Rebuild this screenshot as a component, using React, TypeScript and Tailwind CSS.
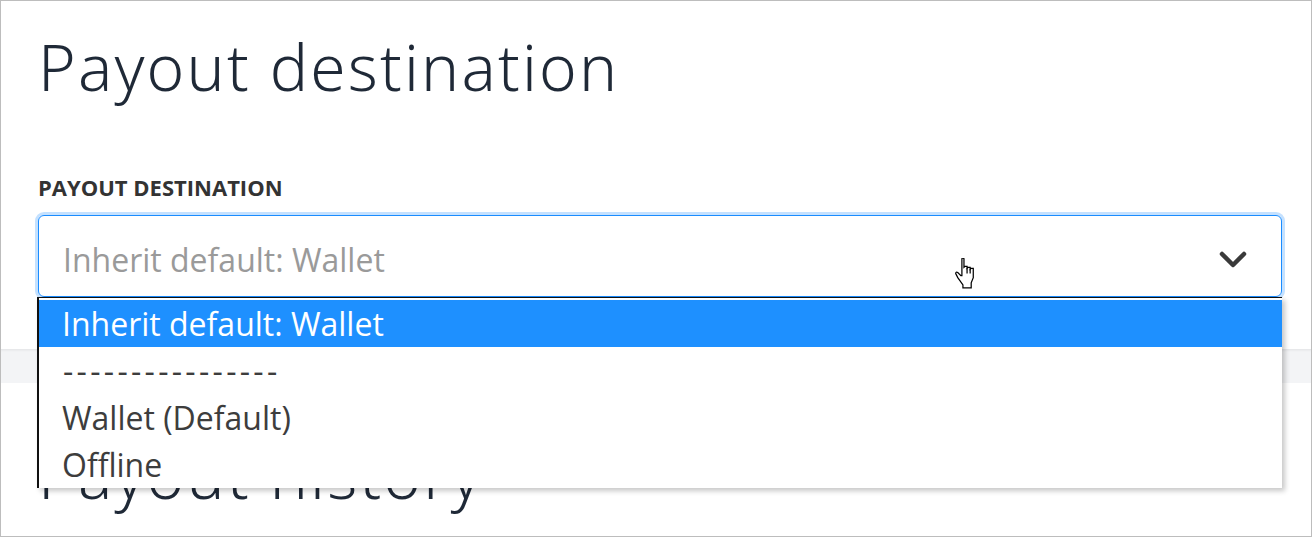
export default function App() {
  const options = ["Inherit default: Wallet", "----------------", "Wallet (Default)", "Offline"];

  return (
    <div className="relative h-[537px] w-[1312px] overflow-hidden border border-[#bdbdbd] bg-white font-['Open_Sans',sans-serif]">
      <section className="pl-[37px] pr-[29px] pt-[22px] pb-[52px]">
        <h1 className="font-['Noto_Sans',sans-serif] text-[64px] font-light leading-[88px] tracking-[2.2px] text-[#1f2937]">
          Payout destination
        </h1>
        <label className="mt-[62px] block text-[22px] font-bold uppercase leading-[28px] text-[#333]">
          Payout destination
        </label>
        <div className="relative mt-[14px] flex h-[82px] items-center justify-between rounded-[6px] border border-[#1a8cff] pt-[8px] pl-[24px] pr-[34px] ring-[3px] ring-[#c4e1ff]">
          <span className="text-[32px] leading-none text-[#9a9a9a]">Inherit default: Wallet</span>
          <svg width="28" height="18" viewBox="0 0 28 18" fill="none" className="shrink-0">
            <polyline points="3,3 14,14 25,3" stroke="#3a3a3a" strokeWidth="4.5" strokeLinecap="round" strokeLinejoin="round" />
          </svg>
        </div>
      </section>

      <div className="h-[34px] bg-[#f3f4f6] shadow-[inset_0_3px_3px_-2px_rgba(0,0,0,0.08)]" />

      <section className="pl-[37px] pt-[48px]">
        <h2 className="font-['Noto_Sans',sans-serif] text-[64px] font-light leading-[88px] tracking-[2.2px] text-[#1f2937]">
          Payout history
        </h2>
      </section>

      {/* open native dropdown */}
      <ul className="absolute left-[36px] top-[296px] w-[1245px] border-l-2 border-t border-[#111] bg-white pt-[2px] shadow-[3px_3px_5px_rgba(0,0,0,0.22)]">
        {options.map((o, i) => (
          <li
            key={o}
            className={
              i === 0
                ? "flex h-[47px] items-center bg-[#1e90ff] pl-[23px] text-[32px] text-white"
                : i === 1
                  ? "flex h-[47px] items-center pl-[24px] text-[32px] tracking-[3.3px] text-[#3d3d3d]"
                  : "flex h-[47px] items-center pl-[23px] text-[32px] text-[#3d3d3d]"
            }
          >
            {o}
          </li>
        ))}
      </ul>

      {/* mouse pointer */}
      <svg className="absolute left-[953px] top-[257px]" width="22" height="31" viewBox="0 0 20 30" fill="white" stroke="black" strokeWidth="1.2">
        <path d="M7 1 Q7 0 8 0 Q9 0 9 1 L9 9 L10 8 L12 8 L12 10 L13 9 L15 9 L15 11 L16 10 L18 10 L18 19 L16 24 L16 29 L8 29 L8 26 L3 19 L1 15 Q1 13 3 14 L6 17 L7 17 Z" />
        <path d="M12 10 L12 15 M15 11 L15 15" fill="none" />
      </svg>
    </div>
  );
}
